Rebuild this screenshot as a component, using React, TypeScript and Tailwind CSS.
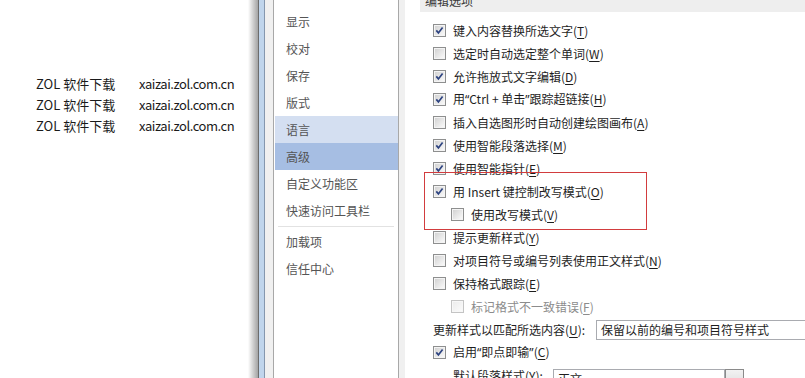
import * as React from 'react'

type Opt = {
  text: React.ReactNode
  hotkey: string
  checked?: boolean
  indent?: boolean
  disabled?: boolean
}

const Q = ({ c }: { c: string }) => <span className="font-['Noto_Sans',sans-serif]">{c}</span>

const navItems = ['显示', '校对', '保存', '版式', '语言', '高级', '自定义功能区', '快速访问工具栏']
const navTail = ['加载项', '信任中心']

const options: Opt[] = [
  { text: '键入内容替换所选文字', hotkey: 'T', checked: true },
  { text: '选定时自动选定整个单词', hotkey: 'W' },
  { text: '允许拖放式文字编辑', hotkey: 'D', checked: true },
  {
    text: (
      <>
        用<Q c="“" />Ctrl + 单击<Q c="”" />跟踪超链接
      </>
    ),
    hotkey: 'H',
    checked: true
  },
  { text: '插入自选图形时自动创建绘图画布', hotkey: 'A' },
  { text: '使用智能段落选择', hotkey: 'M', checked: true },
  { text: '使用智能指针', hotkey: 'E', checked: true },
  { text: '用 Insert 键控制改写模式', hotkey: 'O', checked: true },
  { text: '使用改写模式', hotkey: 'V', indent: true },
  { text: '提示更新样式', hotkey: 'Y' },
  { text: '对项目符号或编号列表使用正文样式', hotkey: 'N' },
  { text: '保持格式跟踪', hotkey: 'E' },
  { text: '标记格式不一致错误', hotkey: 'F', indent: true, disabled: true }
]

function CheckBox({ checked, disabled }: { checked?: boolean; disabled?: boolean }) {
  return (
    <span
      className={`relative block w-[13px] h-[13px] shrink-0 border p-px ${
        disabled ? 'border-[#c4c4c4] bg-[#f7f7f7]' : 'border-[#8e8f8f] bg-[#f4f4f4]'
      }`}
    >
      <span
        className={`block w-full h-full bg-gradient-to-br ${
          disabled ? 'from-[#ececec] to-[#fafafa]' : 'from-[#d3d3d3] to-[#f9f9f9]'
        }`}
      />
      {checked && (
        <svg width="13" height="13" viewBox="0 0 13 13" className="absolute -left-px -top-px">
          <path d="M3.3 6.4 L5.4 8.9 L9.6 3.4" fill="none" stroke="#2d4380" strokeWidth="1.7" strokeLinejoin="miter" />
        </svg>
      )}
    </span>
  )
}

function Label({ text, hotkey, suffix = '' }: { text: React.ReactNode; hotkey: string; suffix?: string }) {
  return (
    <span className="whitespace-nowrap">
      {text}(<u className="underline-offset-2">{hotkey}</u>){suffix}
    </span>
  )
}

export default function App() {
  return (
    <div className="w-[805px] h-[378px] overflow-hidden flex bg-white font-['Noto_Sans_CJK_SC',sans-serif]">
      {/* desktop text on the left */}
      <div className="w-[248px] shrink-0 pt-[73px] pl-[36px] text-[13px] leading-[21px] text-[#1a1a1a]">
        {[0, 1, 2].map(i => (
          <div key={i} className="flex">
            <span className="w-[103px]">ZOL 软件下载</span>
            <span className="tracking-[-0.45px]">xaizai.zol.com.cn</span>
          </div>
        ))}
      </div>

      {/* window frame */}
      <div className="w-[10px] shrink-0 bg-gradient-to-r from-white to-[#a4a4a4]" />
      <div className="w-px shrink-0 bg-[#6c6c6c]" />
      <div className="w-[5px] shrink-0 bg-[#c0d5ec]" />
      <div className="w-px shrink-0 bg-[#8597ae]" />
      <div className="w-[8px] shrink-0 bg-[#f0f0f0]" />

      {/* nav list */}
      <div className="w-[126px] shrink-0 border-x border-[#a8a8a8] bg-white pt-[8px] pl-px text-[12px] text-[#555555]">
        {navItems.map(item => (
          <div
            key={item}
            className={`h-[27px] flex items-center pl-[11px] ${
              item === '语言' ? 'bg-[#d4dff1]' : item === '高级' ? 'bg-[#a6bee3]' : ''
            }`}
          >
            {item}
          </div>
        ))}
        <div className="h-[4px] flex items-center ml-[3px] mr-[4px]">
          <div className="h-px w-full bg-[#e2e2e2]" />
        </div>
        {navTail.map(item => (
          <div key={item} className="h-[27px] flex items-center pl-[11px]">
            {item}
          </div>
        ))}
      </div>

      <div className="w-[6px] shrink-0 bg-[#f0f0f0]" />

      {/* options panel */}
      <div className="relative flex-1 overflow-hidden bg-white text-[12px] text-[#1e1e1e]">
        <div className="ml-[15px] h-[12px] overflow-hidden bg-[#eeeeee]">
          <div className="pl-[5px] mt-[-9px] leading-[20px] text-[#3a3a3a]">编辑选项</div>
        </div>

        <div className="mt-[7px]">
          {options.map((o, i) => (
            <div
              key={i}
              className={`h-[23px] flex items-center gap-[7px] ${o.indent ? 'pl-[46px]' : 'pl-[28px]'} ${
                o.disabled ? 'text-[#8c8c8c]' : ''
              }`}
            >
              <CheckBox checked={o.checked} disabled={o.disabled} />
              <Label text={o.text} hotkey={o.hotkey} />
            </div>
          ))}

          <div className="h-[23px] flex items-center pl-[28px]">
            <span className="w-[163px] shrink-0">
              <Label text="更新样式以匹配所选内容" hotkey="U" suffix=":" />
            </span>
            <div className="flex-1 h-[20px] flex items-center border border-r-0 border-[#a9abb0] pl-[4px] whitespace-nowrap">
              保留以前的编号和项目符号样式
            </div>
          </div>

          <div className="h-[23px] flex items-center gap-[7px] pl-[28px]">
            <CheckBox checked />
            <Label
              text={
                <>
                  启用<Q c="“" />即点即输<Q c="”" />
                </>
              }
              hotkey="C"
            />
          </div>

          <div className="h-[23px] flex items-start pl-[48px]">
            <span className="w-[100px] shrink-0 leading-[23px]">
              <Label text="默认段落样式" hotkey="Y" suffix=":" />
            </span>
            <div className="mt-[5px] w-[172px] h-[20px] flex items-center border border-[#a9abb0] pl-[4px]">正文</div>
            <div className="mt-[5px] w-[19px] h-[20px] border border-[#8a8a8a] bg-gradient-to-b from-[#f2f2f2] to-[#dcdcdc]" />
          </div>
        </div>

        {/* red highlight box drawn over the options */}
        <div className="absolute left-[19px] top-[172px] w-[223px] h-[58px] border border-[#d23c3e]" />
      </div>
    </div>
  )
}
